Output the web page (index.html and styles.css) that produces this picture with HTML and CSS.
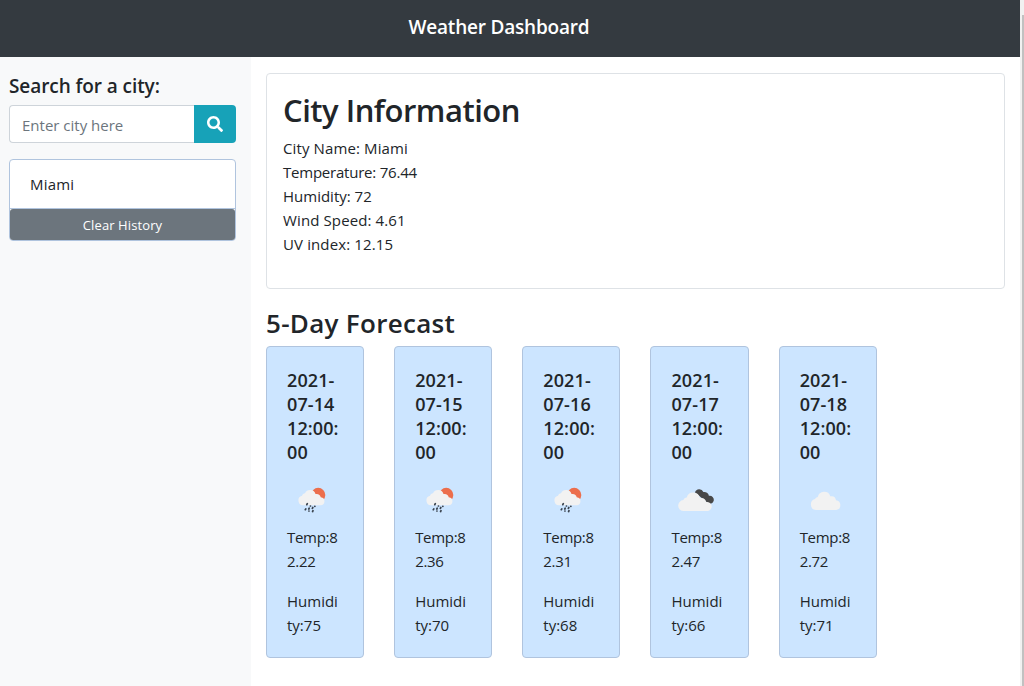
FILE: index.html
```
<!DOCTYPE html>
<html lang="en">
<head>
<meta charset="utf-8">
<title>Weather Dashboard</title>
<link rel="stylesheet" href="styles.css">
</head>
<body>
<svg class="defs" aria-hidden="true">
  <symbol id="rain" viewBox="0 0 50 50">
    <circle cx="31.200" cy="18.900" r="7.100" fill="#ec6e4c"/>
    <path d="M16 30.500a4.900 4.900 0 0 1-1-9.600c.5-1.300 1.600-2.300 3-2.500a5.700 5.700 0 0 1 10.500.8c3-.5 4.900 1.200 5.200 3.200a4 4 0 0 1-.6 8.100z" fill="#f2f2f2" transform="translate(0 -1.200)"/>
    <g stroke="#39424d" stroke-width="1.700" stroke-linecap="round">
      <path d="M20.300 27.700l-.5 1M23.400 30h.1M27.800 30.300h.1M18.800 32.900l-.5.8M22.200 32.200l-.4.800M25.800 31.500l-.4.800M21.900 35h.1M26 34.700l-.4.800"/>
    </g>
  </symbol>
  <symbol id="broken" viewBox="0 0 50 50">
    <path d="M24 16.500a4.500 4.500 0 0 1 8.400-.5 4.600 4.600 0 0 1 5.500 3.800 4.100 4.100 0 0 1 4.900 4.800c-.5 2.300-2.600 3.600-5 3.200z" fill="#484848"/>
    <path d="M13 35.100a5.500 5.500 0 0 1-.6-11c.5-1.500 1.700-2.400 3.300-2.600a6.800 6.800 0 0 1 13.200.6c3.700-.7 6 1.400 6.200 3.900a4.600 4.600 0 0 1 1.900 9.100z" fill="#f2f2f2"/>
  </symbol>
  <symbol id="cloud" viewBox="0 0 50 50">
    <path d="M16 34a5.600 5.600 0 0 1-.9-11c.4-1.200 1.400-2 2.700-2.100a6.500 6.500 0 0 1 12.500-.6c3.300-.7 5.400 1 5.700 3.900a4.950 4.950 0 0 1 .2 9.800z" fill="#f2f2f2"/>
  </symbol>
</svg>
<header class="topbar"><h1 class="brand">Weather Dashboard</h1></header>
<div class="page">
  <aside class="sidebar">
    <h2 class="search-title">Search for a city:</h2>
    <div class="search">
      <input class="search-input" type="text" placeholder="Enter city here">
      <button class="search-button" aria-label="Search">
        <svg width="16" height="16" viewBox="0 0 512 512"><path fill="#fff" d="M505 442.700L405.300 343c-4.500-4.500-10.600-7-17-7H372c27.600-35.300 44-79.700 44-128C416 93.100 322.900 0 208 0S0 93.100 0 208s93.100 208 208 208c48.300 0 92.700-16.400 128-44v16.300c0 6.400 2.500 12.500 7 17l99.700 99.700c9.400 9.400 24.600 9.400 33.900 0l28.300-28.300c9.400-9.400 9.400-24.600.1-34zM208 336c-70.700 0-128-57.200-128-128 0-70.700 57.200-128 128-128 70.700 0 128 57.200 128 128 0 70.700-57.200 128-128 128z"/></svg>
      </button>
    </div>
    <div class="history">
      <div class="history-item">Miami</div>
      <button class="clear">Clear History</button>
    </div>
  </aside>
  <main class="content">
    <section class="info">
      <h2 class="info-title">City Information</h2>
      <p class="line">City Name: Miami</p>
      <p class="line temperature">Temperature: 76.44</p>
      <p class="line humidity">Humidity: 72</p>
      <p class="line">Wind Speed: 4.61</p>
      <p class="line">UV index: 12.15</p>
    </section>
    <h3 class="forecast-title">5-Day Forecast</h3>
    <div class="forecast">
      <article class="day"><h4 class="date">2021-<br>07-14<br>12:00:<br>00</h4><svg class="icon"><use href="#rain"/></svg><p class="stat temp">Temp:8<br>2.22</p><p class="stat">Humidi<br>ty:75</p></article>
      <article class="day"><h4 class="date">2021-<br>07-15<br>12:00:<br>00</h4><svg class="icon"><use href="#rain"/></svg><p class="stat temp">Temp:8<br>2.36</p><p class="stat">Humidi<br>ty:70</p></article>
      <article class="day"><h4 class="date">2021-<br>07-16<br>12:00:<br>00</h4><svg class="icon"><use href="#rain"/></svg><p class="stat temp">Temp:8<br>2.31</p><p class="stat">Humidi<br>ty:68</p></article>
      <article class="day"><h4 class="date">2021-<br>07-17<br>12:00:<br>00</h4><svg class="icon"><use href="#broken"/></svg><p class="stat temp">Temp:8<br>2.47</p><p class="stat">Humidi<br>ty:66</p></article>
      <article class="day"><h4 class="date">2021-<br>07-18<br>12:00:<br>00</h4><svg class="icon"><use href="#cloud"/></svg><p class="stat temp">Temp:8<br>2.72</p><p class="stat">Humidi<br>ty:71</p></article>
    </div>
  </main>
</div>
<div class="scrollbar"><div class="thumb"></div></div>
</body>
</html>
```
FILE: styles.css
```
* { box-sizing: border-box; }
body {
  margin: 0;
  height: 686px;
  overflow: hidden;
  display: grid;
  grid-template: 57px 1fr / 1020px 4px;
  background: #fff;
  color: #212529;
  font: 400 15px/24px "Open Sans", "Noto Sans", sans-serif;
}
h1, h2, h3, h4, p { margin: 0; white-space: nowrap; }
.defs { position: absolute; width: 0; height: 0; }
.topbar {
  background: #343a40;
  color: #fff;
  display: flex;
  justify-content: center;
  padding: 15px 22px 0 0;
}
.brand { font-size: 19px; line-height: 24px; font-weight: 600; letter-spacing: -.2px; }
.page { grid-row: 2; display: flex; }
.scrollbar { grid-column: 2; grid-row: 1 / 3; background: #f1f1f1; padding: 15px 0 0 2px; }
.thumb { height: 100%; background: #c1c1c1; }
.sidebar { width: 251px; background: #f8f9fa; padding: 17px 15px 0 9px; }
.search-title { font-size: 19px; line-height: 24px; font-weight: 600; letter-spacing: -.08px; margin-bottom: 7px; }
.search { display: flex; height: 38px; margin-bottom: 16px; }
.search-input {
  width: 185px;
  padding: 2px 12px 0;
  border: 1px solid #ced4da;
  border-right: 0;
  border-radius: 4px 0 0 4px;
  background: #fff;
  font: inherit;
}
.search-input::placeholder { color: #6c757d; opacity: 1; }
.search-button {
  width: 42px;
  padding: 0;
  border: 0;
  border-radius: 0 4px 4px 0;
  background: #17a2b8;
  display: flex;
  align-items: center;
  justify-content: center;
}
.history {
  height: 82px;
  border: 1px solid #b0c4de;
  border-radius: 4px;
  background: #fff;
  display: flex;
  flex-direction: column;
}
.history-item { height: 49px; padding: 12px 20px; letter-spacing: .2px; border-bottom: 1px solid #b0c4de; }
.clear {
  flex: 1;
  padding: 1px 0 0;
  border: 0;
  border-radius: 3px;
  background: #6c757d;
  color: #fff;
  font: 400 13px/21px "Open Sans", sans-serif;
  letter-spacing: .1px;
}
.content { flex: 1; padding: 16px 15px 0; }
.info { height: 216px; padding: 16px 16px; border: 1px solid #dee2e6; border-radius: 4px; margin-bottom: 17px; }
.info-title { font-size: 31px; line-height: 40px; font-weight: 600; letter-spacing: -.5px; margin-bottom: 6px; }
.line { letter-spacing: .12px; }
.temperature { letter-spacing: -.22px; }
.humidity { letter-spacing: 0; }
.forecast-title { font-size: 26px; line-height: 34px; font-weight: 600; letter-spacing: .3px; margin-bottom: 6px; }
.forecast { display: flex; gap: 30px; }
.day {
  width: 98.17px;
  height: 312px;
  padding: 21px 20px;
  border: 1px solid #b0c4de;
  border-radius: 4px;
  background: #cce5ff;
}
.date { font-size: 18px; line-height: 24px; font-weight: 600; letter-spacing: .1px; margin-bottom: 12px; }
.icon { display: block; width: 50px; height: 50px; margin-bottom: -1px; }
.stat { margin-bottom: 16px; }
.temp { letter-spacing: -.3px; }
```
